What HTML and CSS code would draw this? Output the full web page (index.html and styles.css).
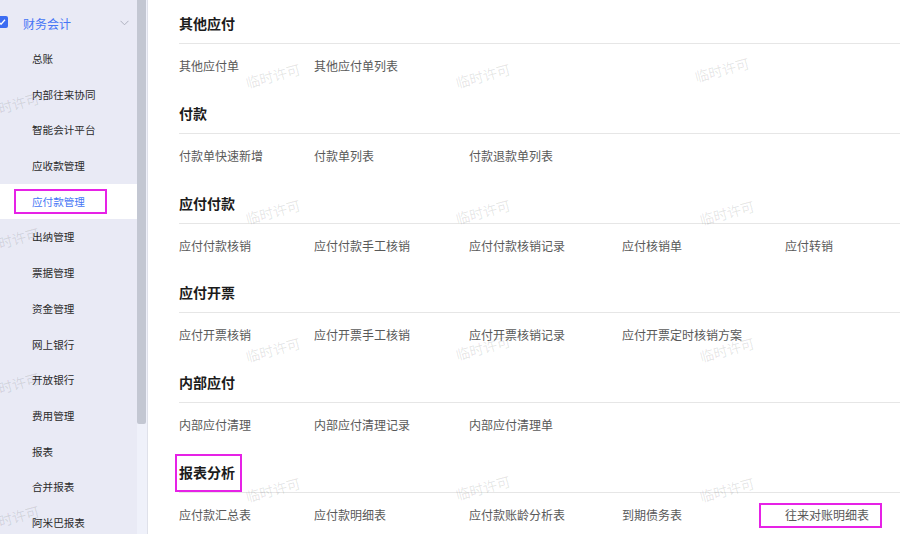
FILE: index.html
```html
<!DOCTYPE html>
<html lang="zh-CN">
<head>
  <meta charset="UTF-8" />
  <title>财务会计 - 应付款管理</title>
  <link rel="stylesheet" href="styles.css">
</head>
<body>
  <div class="layout">
    <!-- Side menu -->
    <aside class="sidebar">
      <div class="menu">
        <div class="menu-head">
          <svg class="check" width="12" height="12" viewBox="0 0 12 12"><rect width="12" height="12" rx="2" fill="#3d6df2"/><path d="M3 6.2l2 2 4-4.4" stroke="#fff" stroke-width="1.3" fill="none"/></svg>
          <span>财务会计</span>
          <svg class="chevron" width="9" height="6" viewBox="0 0 9 6"><path d="M0.5 0.8l4 4 4-4" stroke="#aeb1bf" stroke-width="1" fill="none"/></svg>
        </div>
        <ul class="menu-list">
          <li>总账</li>
          <li>内部往来协同</li>
          <li>智能会计平台</li>
          <li>应收款管理</li>
          <li class="active">应付款管理</li>
          <li>出纳管理</li>
          <li>票据管理</li>
          <li>资金管理</li>
          <li>网上银行</li>
          <li>开放银行</li>
          <li>费用管理</li>
          <li>报表</li>
          <li>合并报表</li>
          <li>阿米巴报表</li>
        </ul>
      </div>
      <div class="scrollbar"><div class="thumb"></div></div>
    </aside>

    <!-- Function groups -->
    <main class="content">
      <section class="group">
        <h3>其他应付</h3>
        <div class="links">
          <a>其他应付单</a><a>其他应付单列表</a>
        </div>
      </section>
      <section class="group">
        <h3>付款</h3>
        <div class="links">
          <a>付款单快速新增</a><a>付款单列表</a><a>付款退款单列表</a>
        </div>
      </section>
      <section class="group">
        <h3>应付付款</h3>
        <div class="links">
          <a>应付付款核销</a><a>应付付款手工核销</a><a>应付付款核销记录</a><a>应付核销单</a><a>应付转销</a>
        </div>
      </section>
      <section class="group">
        <h3>应付开票</h3>
        <div class="links">
          <a>应付开票核销</a><a>应付开票手工核销</a><a>应付开票核销记录</a><a>应付开票定时核销方案</a>
        </div>
      </section>
      <section class="group">
        <h3>内部应付</h3>
        <div class="links">
          <a>内部应付清理</a><a>内部应付清理记录</a><a>内部应付清理单</a>
        </div>
      </section>
      <section class="group">
        <h3><span class="mark-title">报表分析</span></h3>
        <div class="links">
          <a>应付款汇总表</a><a>应付款明细表</a><a>应付款账龄分析表</a><a>到期债务表</a><a class="mark-link">往来对账明细表</a>
        </div>
      </section>
    </main>

    <!-- Licence watermark -->
    <div class="watermarks">
      <span class="wm s1">临时许可</span>
      <span class="wm s2">临时许可</span>
      <span class="wm s3">临时许可</span>
      <span class="wm s4">临时许可</span>
      <span class="wm m1">临时许可</span>
      <span class="wm m2">临时许可</span>
      <span class="wm m3">临时许可</span>
      <span class="wm m4">临时许可</span>
      <span class="wm m5">临时许可</span>
      <span class="wm m6">临时许可</span>
      <span class="wm m7">临时许可</span>
      <span class="wm m8">临时许可</span>
      <span class="wm m9">临时许可</span>
      <span class="wm m10">临时许可</span>
      <span class="wm m11">临时许可</span>
      <span class="wm m12">临时许可</span>
    </div>
  </div>
</body>
</html>
```

FILE: styles.css
```css
body {
  margin: 0;
  padding: 0;
  font-family: "Noto Sans CJK SC", "Noto Sans", sans-serif;
  background-color: #fff;
  color: #333;
  overflow: hidden;
}
.layout {
  position: relative;
  display: flex;
  width: 900px;
  height: 534px;
  overflow: hidden;
}

/* side menu */
.sidebar {
  display: flex;
  flex: 0 0 auto;
  height: 534px;
  border-right: 1px solid #dfe1ea;
}
.menu {
  width: 137px;
  background-color: #e9eaf5;
  padding-top: 5px;
  box-sizing: border-box;
  overflow: hidden;
}
.menu-head {
  display: flex;
  align-items: center;
  height: 36px;
  font-size: 12px;
  color: #4676f5;
}
.menu-head .check {
  margin-left: -4px;
  margin-right: 15px;
  margin-top: -2px;
}
.menu-head .chevron {
  margin-left: auto;
  margin-right: 8px;
}
.menu-list {
  list-style: none;
  margin: 0;
  padding: 0;
}
.menu-list li {
  position: relative;
  height: 35.7px;
  line-height: 35.7px;
  padding-left: 32px;
  font-size: 10.6px;
  color: #2b2b2b;
}
.menu-list li.active {
  background-color: #fff;
  color: #4676f5;
}
.menu-list li.active::after {
  content: "";
  position: absolute;
  left: 14px;
  top: 5px;
  width: 93px;
  height: 25px;
  border: 2px solid #e622e6;
  box-sizing: border-box;
}
.scrollbar {
  width: 10px;
  background-color: #eff1fa;
}
.scrollbar .thumb {
  width: 9px;
  height: 424px;
  background-color: #c3c7d2;
  border-radius: 0 0 2px 2px;
}

/* content */
.content {
  flex: 1;
  padding-left: 31px;
}
.group {
  height: 89.8px;
}
.group h3 {
  margin: 0;
  padding: 16px 0 13px;
  font-size: 14px;
  line-height: 14px;
  font-weight: bold;
  color: #1c1c1c;
  border-bottom: 1px solid #e6e6e6;
}
.links {
  display: grid;
  grid-template-columns: 135px 155px 153px 163px auto;
  justify-items: start;
  padding-top: 16px;
  font-size: 12px;
  line-height: 12px;
}
.links a {
  color: #595959;
  white-space: nowrap;
}
.mark-title,
.mark-link {
  position: relative;
}
.mark-title::after {
  content: "";
  position: absolute;
  left: -4px;
  right: -7px;
  top: -8px;
  bottom: -10px;
  border: 2px solid #e622e6;
}
.mark-link::after {
  content: "";
  position: absolute;
  left: -26px;
  right: -13px;
  top: -6px;
  height: 25px;
  border: 2px solid #e622e6;
  box-sizing: border-box;
}

/* watermark */
.watermarks {
  position: absolute;
  inset: 0;
  pointer-events: none;
}
.wm {
  position: absolute;
  font-size: 14px;
  line-height: 15px;
  color: rgba(0, 0, 0, 0.11);
  transform: translate(-50%, -50%) rotate(-15deg);
  white-space: nowrap;
}
.s1 { left: 12px; top: 105px; }
.s2 { left: 12px; top: 240px; }
.s3 { left: 12px; top: 385px; }
.s4 { left: 12px; top: 518px; }
.m1 { left: 273px; top: 76px; }
.m2 { left: 483px; top: 76px; }
.m3 { left: 722px; top: 70px; }
.m4 { left: 273px; top: 212px; }
.m5 { left: 483px; top: 212px; }
.m6 { left: 727px; top: 213px; }
.m7 { left: 273px; top: 350px; }
.m8 { left: 483px; top: 348px; }
.m9 { left: 727px; top: 350px; }
.m10 { left: 273px; top: 490px; }
.m11 { left: 483px; top: 488px; }
.m12 { left: 727px; top: 490px; }
```
